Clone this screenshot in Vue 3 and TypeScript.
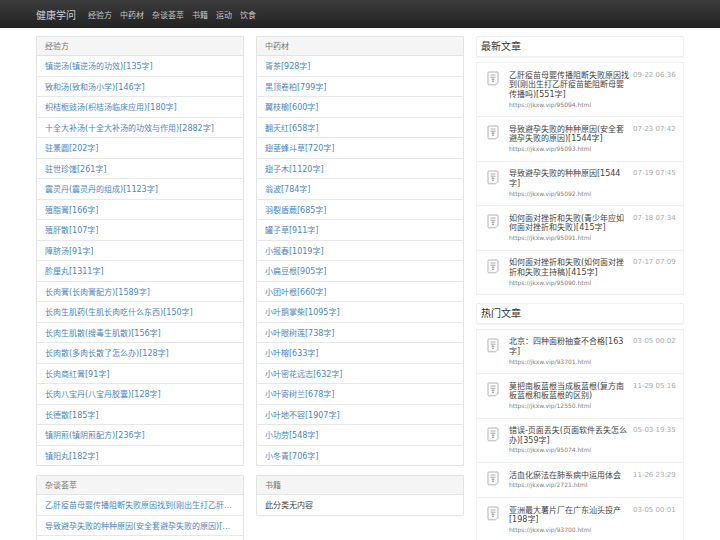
<script setup lang="ts">
const nav = ['经验方', '中药材', '杂谈荟萃', '书籍', '运动', '饮食']
const col1 = ['镇逆汤(镇逆汤的功效)[135字]','致和汤(致和汤小学)[146字]','枳桔栀豉汤(枳桔汤临床应用)[180字]','十全大补汤(十全大补汤的功效与作用)[2882字]','驻景圆[202字]','驻世珍馐[261字]','震灵丹(震灵丹的组成)[1123字]','殖脂膏[166字]','殖肝散[107字]','障脐汤[91字]','胗厘丸[1311字]','长肉膏(长肉膏配方)[1589字]','长肉生肌药(生肌长肉吃什么东西)[150字]','长肉生肌散(搜毒生肌散)[156字]','长肉散(多肉长散了怎么办)[128字]','长肉商红膏[91字]','长肉八宝丹(八宝丹胶囊)[128字]','长德散[185字]','镇阴煎(镇阴煎配方)[236字]','镇阳丸[182字]']
const col2 = ['胥茶[928字]','黑顶卷柏[799字]','翼枝榆[600字]','翻天红[658字]','翅茎蜂斗草[720字]','翅子木[1120字]','翁波[784字]','羽裂盾蕨[685字]','罐子草[911字]','小报春[1019字]','小扁豆根[905字]','小团叶根[660字]','小叶鹅掌柴[1095字]','小叶眼树莲[738字]','小叶榕[633字]','小叶密花远志[632字]','小叶寄树兰[678字]','小叶地不容[1907字]','小功劳[548字]','小冬青[706字]']
const misc = ['乙肝疫苗母婴传播阻断失败原因找到(刚出生打乙肝疫苗能阻断母婴传播吗)[551字]','导致避孕失败的种种原因(安全套避孕失败的原因)[1544字]','导致避孕失败的种种原因[1544字]']
const latest = [
  { t: '乙肝疫苗母婴传播阻断失败原因找到(刚出生打乙肝疫苗能阻断母婴传播吗)[551字]', u: 'https://jkxw.vip/95094.html', d: '09-22 06:36' },
  { t: '导致避孕失败的种种原因(安全套避孕失败的原因)[1544字]', u: 'https://jkxw.vip/95093.html', d: '07-23 07:42' },
  { t: '导致避孕失败的种种原因[1544字]', u: 'https://jkxw.vip/95092.html', d: '07-19 07:45' },
  { t: '如何面对挫折和失败(青少年应如何面对挫折和失败)[415字]', u: 'https://jkxw.vip/95091.html', d: '07-18 07:34' },
  { t: '如何面对挫折和失败(如何面对挫折和失败主持稿)[415字]', u: 'https://jkxw.vip/95090.html', d: '07-17 07:09' },
]
const hot = [
  { t: '北京：四种面粉抽查不合格[163字]', u: 'https://jkxw.vip/93701.html', d: '03-05 00:02' },
  { t: '莫把南板蓝根当成板蓝根(复方南板蓝根和板蓝根的区别)', u: 'https://jkxw.vip/12550.html', d: '11-29 05:16' },
  { t: '错误-页面丢失(页面软件丢失怎么办)[359字]', u: 'https://jkxw.vip/95074.html', d: '05-03 19:35' },
  { t: '活血化瘀法在肺系病中运用体会', u: 'https://jkxw.vip/2721.html', d: '11-26 23:29' },
  { t: '亚洲最大薯片厂在广东汕头投产[198字]', u: 'https://jkxw.vip/93700.html', d: '03-05 00:01' },
]
const sections = [
  { title: '最新文章', items: latest },
  { title: '热门文章', items: hot },
]
</script>

<template>
  <div class="page">
    <header class="top">
      <span class="brand">健康学问</span>
      <a v-for="n in nav" :key="n" class="nav">{{ n }}</a>
    </header>
    <main class="grid">
      <div class="col">
        <section class="panel">
          <h3>经验方</h3>
          <a v-for="x in col1" :key="x" class="row">{{ x }}</a>
        </section>
        <section class="panel">
          <h3>杂谈荟萃</h3>
          <a v-for="x in misc" :key="x" class="row">{{ x }}</a>
        </section>
      </div>
      <div class="col">
        <section class="panel">
          <h3>中药材</h3>
          <a v-for="x in col2" :key="x" class="row">{{ x }}</a>
        </section>
        <section class="panel">
          <h3>书籍</h3>
          <div class="row empty">此分类无内容</div>
        </section>
      </div>
      <div class="col side">
        <template v-for="s in sections" :key="s.title">
          <h2 class="side-title">{{ s.title }}</h2>
          <ul class="list">
            <li v-for="it in s.items" :key="it.u" class="item">
              <svg class="ico" viewBox="0 0 12 15" width="12" height="15">
                <path d="M1.8 1h8.4c.5 0 .8.3.8.8v9.400c0 .3-.1.5-.3.7l-1.600 1.600c-.2.2-.4.3-.7.3H1.800c-.5 0-.8-.3-.8-.8V1.800c0-.5.3-.8.8-.8z" fill="#fdfdfd" stroke="#aaa" stroke-width=".9" />
                <path d="M3.500 4h5M3.500 6.200h5M4.500 8.400h3M6 6.200v4.300M5 10.500h2" stroke="#999" stroke-width=".8" fill="none" />
              </svg>
              <div class="body">
                <div class="t">{{ it.t }}</div>
                <div class="u">{{ it.u }}</div>
              </div>
              <time class="d">{{ it.d }}</time>
            </li>
          </ul>
        </template>
      </div>
    </main>
  </div>
</template>

<style>
html, body { margin: 0; padding: 0; background: #fff; }
</style>

<style scoped>
.page {
  height: 540px;
  overflow: hidden;
  font-family: "DejaVu Sans", "Noto Sans CJK SC", sans-serif;
  font-size: 8px;
  color: #333;
}
.top {
  height: 28px;
  box-sizing: border-box;
  padding-left: 36px;
  display: flex;
  align-items: center;
  background: linear-gradient(#3c3c3c, #222);
}
.brand { font-size: 10px; color: #ccc; margin-right: 12px; }
.nav { color: #c4c4c4; margin-right: 8px; }
.grid {
  display: grid;
  grid-template-columns: 207.5px 207.5px 207.5px;
  column-gap: 12.5px;
  padding: 8.3px 0 0 36.3px;
}
.panel {
  border: 1px solid #e3e3e3;
  border-radius: 1px;
  margin-bottom: 9px;
}
.panel h3 {
  margin: 0;
  font-size: 8px;
  font-weight: 400;
  line-height: 11px;
  color: #777;
  background: #f5f5f5;
  padding: 3.500px 7.700px 3.500px;
  border-bottom: 1px solid #e3e3e3;
}
.row {
  display: block;
  padding: 5px 7.700px 3.500px;
  line-height: 11px;
  color: #4a86c5;
  border-bottom: 1px solid #e8e8e8;
  white-space: nowrap;
  overflow: hidden;
  text-overflow: ellipsis;
}
.row:last-child { border-bottom: 0; }
.row.empty { color: #444; }
.side-title {
  margin: 0 0 5px;
  font-size: 10px;
  font-weight: 400;
  line-height: 13px;
  color: #333;
  padding: 3px 3.700px;
  border: 1px solid #efefef;
  border-radius: 2px;
  box-shadow: 0 1px 1px rgba(0,0,0,.05);
}
.list {
  list-style: none;
  margin: 0 0 7.500px;
  padding: 0;
  border: 1px solid #efefef;
}
.item {
  display: flex;
  align-items: flex-start;
  padding: 7.500px 0 6.800px 9.700px;
  border-bottom: 1px solid #efefef;
}
.item:last-child { border-bottom: 0; }
.ico { flex: none; margin: 0.500px 10px 0 0; }
.body { width: 121px; flex: none; }
.t { line-height: 9.600px; color: #444; }
.u { font-size: 6px; line-height: 10px; color: #808080; }
.d { font-size: 7px; line-height: 9.600px; color: #aaa; margin-left: 3px; white-space: nowrap; }
</style>
